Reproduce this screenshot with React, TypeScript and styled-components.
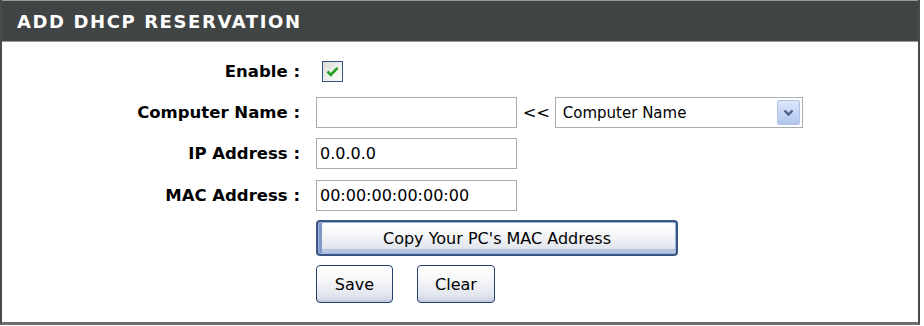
import React from 'react'
import styled, { createGlobalStyle } from 'styled-components'

const GlobalStyle = createGlobalStyle`
  html, body {
    margin: 0;
    padding: 0;
    background: #ffffff;
  }
  body {
    font-family: 'DejaVu Sans', Tahoma, sans-serif;
  }
`

const Box = styled.section`
  width: 920px;
  height: 325px;
  box-sizing: border-box;
  border-left: 2px solid #4a4a4a;
  border-right: 2px solid #4a4a4a;
  border-bottom: 3px solid #6e6e6e;
  background: #ffffff;
  display: flex;
  flex-direction: column;
`

const Header = styled.h2`
  margin: 0;
  height: 42px;
  box-sizing: border-box;
  border-top: 1px solid #9a9a9a;
  border-bottom: 1px solid #9a9a9a;
  background: #404445;
  color: #ffffff;
  font-family: 'DejaVu Sans', sans-serif;
  font-weight: bold;
  font-size: 18px;
  letter-spacing: 1.6px;
  display: flex;
  align-items: center;
  padding-left: 15px;
`

const Form = styled.div`
  display: flex;
  flex-direction: column;
  padding-top: 9px;
`

const Row = styled.div<{ $h: number }>`
  display: grid;
  grid-template-columns: 298px 1fr;
  column-gap: 16px;
  align-items: center;
  height: ${p => p.$h}px;
`

const Label = styled.label`
  text-align: right;
  font-family: 'DejaVu Sans', sans-serif;
  font-weight: bold;
  font-size: 16.5px;
  color: #000000;
  white-space: nowrap;
`

const Field = styled.div`
  display: flex;
  align-items: center;
`

const TextInput = styled.input`
  width: 201px;
  height: 31px;
  box-sizing: border-box;
  border: 1px solid #a5acb2;
  outline: none;
  padding: 0 3px;
  font-family: 'DejaVu Sans', Tahoma, sans-serif;
  font-size: 16px;
  color: #000000;
  background: #ffffff;
`

const Check = styled.span`
  width: 21px;
  height: 21px;
  box-sizing: border-box;
  margin-left: 6px;
  border: 1px solid #2f5584;
  background: linear-gradient(135deg, #dcdcd7 0%, #f5f5f1 70%, #ffffff 100%);
  display: flex;
  align-items: center;
  justify-content: center;
`

const Arrows = styled.span`
  margin: 0 5px 0 6px;
  font-family: 'DejaVu Sans', sans-serif;
  font-size: 16px;
  color: #000000;
`

const Select = styled.div`
  width: 248px;
  height: 31px;
  box-sizing: border-box;
  border: 1px solid #a5acb2;
  display: flex;
  align-items: center;
  padding: 2px;
  font-family: 'DejaVu Sans', Tahoma, sans-serif;
  font-size: 15px;
  color: #000000;
`

const SelectText = styled.span`
  flex: 1;
  padding-left: 5px;
`

const DropButton = styled.span`
  width: 23px;
  height: 25px;
  box-sizing: border-box;
  border: 1px solid #b0c2ea;
  border-radius: 2px;
  background: linear-gradient(180deg, #dde7fb 0%, #c5d5f5 55%, #b3c6ee 100%);
  display: flex;
  align-items: center;
  justify-content: center;
`

const Button = styled.button<{ $w: number; $focus?: boolean }>`
  width: ${p => p.$w}px;
  height: ${p => (p.$focus ? 36 : 38)}px;
  box-sizing: border-box;
  border: ${p => (p.$focus ? '2px solid #3a5582' : '1px solid #24426e')};
  border-radius: 4px;
  background: linear-gradient(180deg, #ffffff 0%, #f5f6f8 40%, #e2e6ee 80%, #ccd4e3 100%);
  box-shadow: ${p =>
    p.$focus
      ? 'inset 0 0 0 1px #9fb4dc, inset 3px 0 0 1px #7f97c6, inset 0 -4px 0 1px #b7c5de'
      : 'inset 0 -2px 0 #c3ccdc'};
  font-family: 'DejaVu Sans', Tahoma, sans-serif;
  font-size: 16px;
  color: #000000;
  padding: 0;
  cursor: pointer;
`

const ButtonGroup = styled.div`
  display: flex;
  gap: 24px;
`

const App: React.FC = () => {
  return (
    <>
      <GlobalStyle />
      <Box>
        <Header>ADD DHCP RESERVATION</Header>
        <Form>
          <Row $h={41}>
            <Label>Enable :</Label>
            <Field>
              <Check>
                <svg width="13" height="11" viewBox="0 0 13 11">
                  <path d="M1.5 5.5 L4.8 8.8 L11.5 1.8" fill="none" stroke="#21a121" strokeWidth="2.6" />
                </svg>
              </Check>
            </Field>
          </Row>
          <Row $h={41}>
            <Label>Computer Name :</Label>
            <Field>
              <TextInput defaultValue="" />
              <Arrows>&lt;&lt;</Arrows>
              <Select>
                <SelectText>Computer Name</SelectText>
                <DropButton>
                  <svg width="11" height="8" viewBox="0 0 11 8">
                    <path d="M1.5 1.5 L5.5 5.5 L9.5 1.5" fill="none" stroke="#4d6185" strokeWidth="2.4" />
                  </svg>
                </DropButton>
              </Select>
            </Field>
          </Row>
          <Row $h={41}>
            <Label>IP Address :</Label>
            <Field>
              <TextInput defaultValue="0.0.0.0" />
            </Field>
          </Row>
          <Row $h={42}>
            <Label>MAC Address :</Label>
            <Field>
              <TextInput defaultValue="00:00:00:00:00:00" />
            </Field>
          </Row>
          <Row $h={44}>
            <span />
            <Field>
              <Button $w={362} $focus>Copy Your PC's MAC Address</Button>
            </Field>
          </Row>
          <Row $h={48}>
            <span />
            <Field>
              <ButtonGroup>
                <Button $w={77}>Save</Button>
                <Button $w={78}>Clear</Button>
              </ButtonGroup>
            </Field>
          </Row>
        </Form>
      </Box>
    </>
  )
}

export default App
